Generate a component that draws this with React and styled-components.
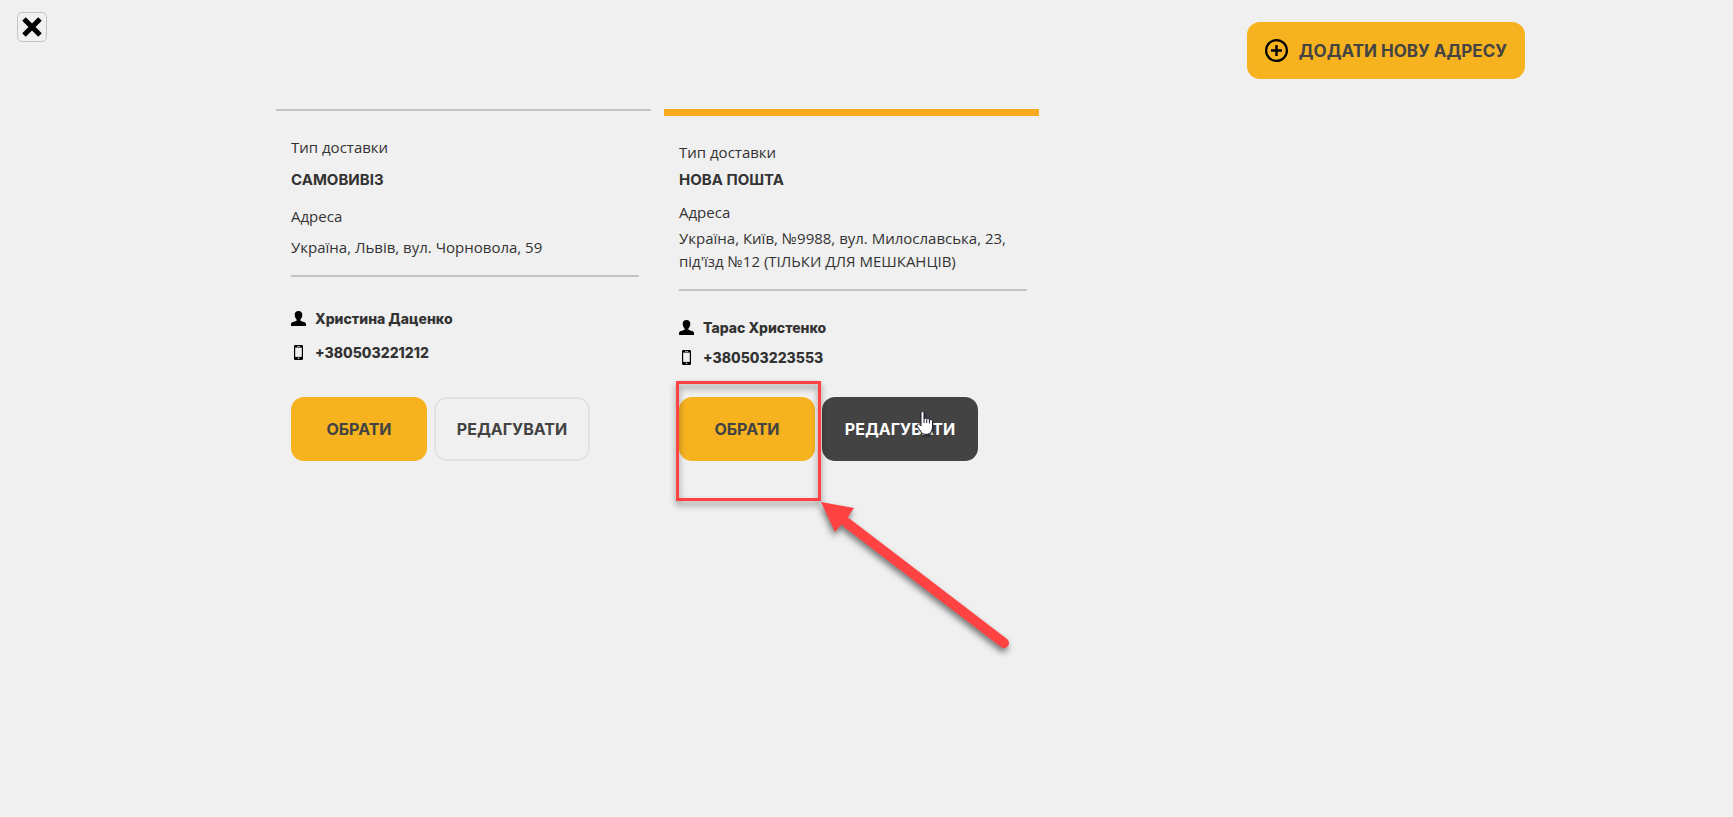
import React from 'react';
import styled, { createGlobalStyle } from 'styled-components';

const GlobalStyle = createGlobalStyle`
  *, *::before, *::after { box-sizing: border-box; }
  body {
    margin: 0;
    background: #f0f0f0;
    color: #333;
    font-family: 'Open Sans', 'Noto Sans', sans-serif;
    font-size: 15px;
    line-height: 23px;
  }
`;

const Page = styled.div`
  min-height: 100vh;
  overflow: hidden;
`;

const Header = styled.header`
  display: flex;
  justify-content: space-between;
  align-items: flex-start;
  padding: 12px 12% 0 17px;
`;

const CloseButton = styled.button`
  display: flex;
  align-items: center;
  justify-content: center;
  width: 30px;
  height: 30px;
  padding: 0;
  border: 1px solid #c4c4c4;
  border-radius: 5px;
  background: #f0f0f0;
  cursor: pointer;
`;

const themes = {
  primary: { background: '#f7b220', border: '#f7b220', color: '#434343' },
  outline: { background: 'transparent', border: '#e2e2e2', color: '#434343' },
  dark: { background: '#434343', border: '#434343', color: '#fff' },
};

const Button = styled.button`
  display: inline-flex;
  align-items: center;
  justify-content: center;
  height: 64px;
  padding: 0;
  min-width: ${(p) => p.$width}px;
  border: 2px solid ${(p) => themes[p.$variant].border};
  border-radius: 13px;
  background: ${(p) => themes[p.$variant].background};
  color: ${(p) => themes[p.$variant].color};
  font-family: Inter, sans-serif;
  font-size: 16px;
  font-weight: 700;
  text-transform: uppercase;
  white-space: nowrap;
  cursor: pointer;
`;

const AddButton = styled(Button)`
  gap: 11px;
  height: 57px;
  margin-top: 10px;
  padding: 0 16px;
  font-size: 17px;
`;

const CardList = styled.main`
  display: grid;
  grid-template-columns: repeat(3, minmax(0, 375px));
  gap: 13px;
  max-width: 1181px;
  margin: 30px auto 0;
`;

const Card = styled.article`
  display: flex;
  flex-direction: column;
  justify-content: space-between;
  padding: 25px 12px 0 15px;
  border-top: ${(p) => (p.$active ? '7px solid #f9ab20' : '2px solid #c4c4c4')};
`;

const Label = styled.div``;

const DeliveryType = styled.div`
  margin: 4px 0 10px;
  font-family: Inter, sans-serif;
  font-weight: 700;
  text-transform: uppercase;
`;

const Address = styled.address`
  margin: 3px 0 25px;
  padding-bottom: 16px;
  border-bottom: 2px solid #c4c4c4;
  font-style: normal;
`;

const Contact = styled.div`
  display: flex;
  align-items: center;
  gap: 9px;
  margin-bottom: ${(p) => (p.$last ? 28 : 7)}px;
  font-family: Inter, sans-serif;
  font-size: 14px;
  font-weight: 800;
`;

const Actions = styled.div`
  display: flex;
  gap: 7px;
`;

const Anchor = styled.div`
  position: relative;
  display: flex;
`;

const Highlight = styled.div`
  position: absolute;
  left: -3px;
  top: -16px;
  width: 145px;
  height: 120px;
  border: 3px solid #ff4343;
  filter: drop-shadow(0 4px 3px rgba(0, 0, 0, 0.45));
  pointer-events: none;
  z-index: 2;
`;

const Arrow = styled.svg`
  position: absolute;
  left: 142px;
  top: 105px;
  overflow: visible;
  filter: drop-shadow(-1px 4px 3px rgba(0, 0, 0, 0.5));
  pointer-events: none;
  z-index: 2;
`;

const Pointer = styled.svg`
  position: absolute;
  left: 94px;
  top: 14px;
  filter: drop-shadow(1px 2px 1px rgba(0, 0, 0, 0.4));
  pointer-events: none;
`;

const CloseIcon = () => (
  <svg width="20" height="20" viewBox="0 0 20 20" aria-hidden="true">
    <path d="M2 2 18 18M18 2 2 18" stroke="#000" strokeWidth="5" />
  </svg>
);

const PlusIcon = () => (
  <svg width="23" height="23" viewBox="0 0 23 23" fill="none" stroke="#000" aria-hidden="true">
    <circle cx="11.5" cy="11.5" r="10.4" strokeWidth="2.2" />
    <path d="M11.5 6v11M6 11.5h11" strokeWidth="2.4" />
  </svg>
);

const PersonIcon = () => (
  <svg width="15" height="15" viewBox="0 0 15 15" aria-hidden="true">
    <path d="M7.5 0C9.8 0 11.4 1.5 11.3 4.1C11.2 6 10.5 7.6 9.4 8.5V9.8C11.5 10.8 15 11.1 15 13V15H0V13C0 11.1 3.5 10.8 5.6 9.8V8.5C4.5 7.6 3.8 6 3.7 4.1C3.6 1.5 5.2 0 7.5 0Z" />
  </svg>
);

const PhoneIcon = () => (
  <svg width="15" height="15" viewBox="0 0 15 15" aria-hidden="true">
    <rect x="3" width="9" height="15" rx="1.3" />
    <rect x="4.2" y="2.6" width="6.6" height="9.3" fill="#f0f0f0" />
    <path d="M6 1.4h3" stroke="#f0f0f0" strokeWidth=".7" />
    <circle cx="7.5" cy="13.3" r=".8" fill="#f0f0f0" />
  </svg>
);

function AddressCard({ type, address, name, phone, active }) {
  return (
    <Card $active={active}>
      <Label>Тип доставки</Label>
      <DeliveryType>{type}</DeliveryType>
      <Label>Адреса</Label>
      <Address>{address}</Address>
      <Contact><PersonIcon />{name}</Contact>
      <Contact $last><PhoneIcon />{phone}</Contact>
      <Actions>
        <Anchor>
          <Button type="button" $variant="primary" $width={136}>Обрати</Button>
          {active && (
            <>
              <Highlight />
              <Arrow width="188" height="146" viewBox="0 0 188 146" aria-hidden="true">
                <path d="M26 21 183 141" stroke="#ff4343" strokeWidth="10" strokeLinecap="round" />
                <path d="M0 0 33 6 27 15 20 23 14 30Z" fill="#ff4343" />
              </Arrow>
            </>
          )}
        </Anchor>
        <Anchor>
          <Button type="button" $variant={active ? 'dark' : 'outline'} $width={156}>Редагувати</Button>
          {active && (
            <Pointer width="18" height="25" viewBox="0 0 18 25" aria-hidden="true">
              <path
                d="M5 1.8C5 .2 8 .2 8 1.8V8C8.5 6.7 10.6 7 10.7 8.2C11.5 7.2 13.3 7.5 13.4 8.9C14.3 8 16.5 8.6 16.5 10.5V16C16.5 18.5 15.5 19.5 15 21C14 24 7 24 5.5 21.5C4.4 19.7 2.5 17 1.1 15.2C.1 13.7 2 12.2 3.4 13.4L5 15Z"
                fill="#fff"
                stroke="#1c1c33"
              />
              <path d="M8 8v4M10.7 8.5V12M13.4 9v3.5" stroke="#1c1c33" />
            </Pointer>
          )}
        </Anchor>
      </Actions>
    </Card>
  );
}

const addresses = [
  {
    type: 'Самовивіз',
    address: 'Україна, Львів, вул. Чорновола, 59',
    name: 'Христина Даценко',
    phone: '+380503221212',
  },
  {
    type: 'Нова пошта',
    address: "Україна, Київ, №9988, вул. Милославська, 23, під'їзд №12 (ТІЛЬКИ ДЛЯ МЕШКАНЦІВ)",
    name: 'Тарас Христенко',
    phone: '+380503223553',
    active: true,
  },
];

export default function App() {
  return (
    <Page>
      <GlobalStyle />
      <Header>
        <CloseButton type="button" aria-label="Закрити"><CloseIcon /></CloseButton>
        <AddButton type="button" $variant="primary" $width={277}>
          <PlusIcon />
          Додати нову адресу
        </AddButton>
      </Header>
      <CardList>
        {addresses.map((item) => (
          <AddressCard key={item.phone} {...item} />
        ))}
      </CardList>
    </Page>
  );
}
